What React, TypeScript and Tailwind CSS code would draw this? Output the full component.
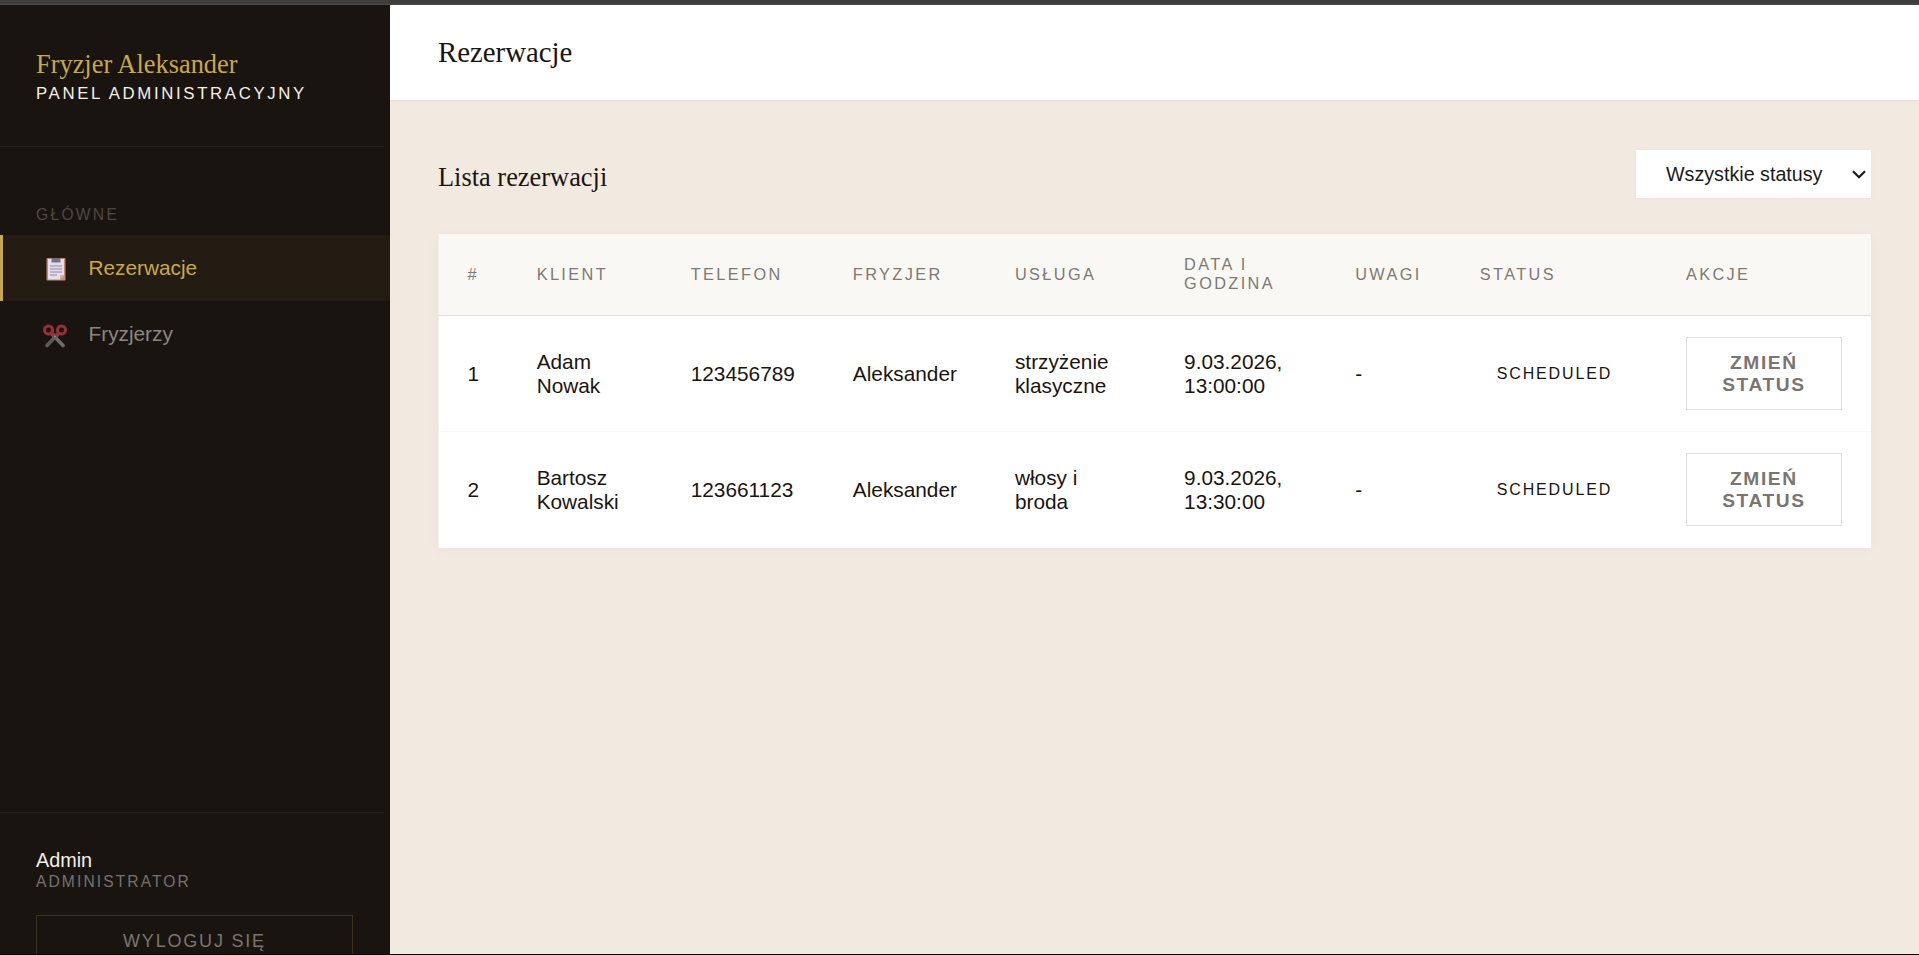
const columns = [
  { label: "#", width: "w-[69px]" },
  { label: "Klient", width: "w-[154px]" },
  { label: "Telefon", width: "w-[162px]" },
  { label: "Fryzjer", width: "w-[162px]" },
  { label: "Usługa", width: "w-[169px]" },
  { label: "Data i godzina", width: "w-[171px]" },
  { label: "Uwagi", width: "w-[124.5px]" },
  { label: "Status", width: "w-[206px]" },
  { label: "Akcje", width: "w-[213.5px]" },
];

const reservations = [
  {
    id: 1,
    client: "Adam Nowak",
    phone: "123456789",
    barber: "Aleksander",
    service: "strzyżenie klasyczne",
    date: "9.03.2026, 13:00:00",
    notes: "-",
    status: "scheduled",
  },
  {
    id: 2,
    client: "Bartosz Kowalski",
    phone: "123661123",
    barber: "Aleksander",
    service: "włosy i broda",
    date: "9.03.2026, 13:30:00",
    notes: "-",
    status: "scheduled",
  },
];

function ClipboardIcon() {
  return (
    <svg width="20" height="24" viewBox="0 0 20 24" aria-hidden="true">
      <rect x="0.5" y="1" width="19" height="22.5" rx="1" fill="#c08a6c" />
      <path d="M2 2h16v16l-4 4.5H2z" fill="#e6def0" />
      <path d="M18 18h-4v4.5z" fill="#c9b3c4" />
      <path d="M18.5 18.5v4.5h-4.5z" fill="#c99a55" />
      <rect x="5.5" y="1" width="9" height="4.5" rx="0.8" fill="#77707f" />
      <path d="M4 9h12M4 12h12M4 15h12M4 18h7" stroke="#8f8a9c" strokeWidth="1" />
    </svg>
  );
}

function ScissorsIcon() {
  return (
    <svg width="24" height="24" viewBox="0 0 24 24" fill="none" aria-hidden="true">
      <path d="M8.5 9.5l11.5 12" stroke="#6f6b6b" strokeWidth="3.6" strokeLinecap="round" />
      <path d="M15.5 9.5l-11.5 12" stroke="#5f5b5b" strokeWidth="3.6" strokeLinecap="round" />
      <circle cx="5.5" cy="6" r="4" stroke="#96303c" strokeWidth="3" />
      <circle cx="18.5" cy="6" r="4" stroke="#96303c" strokeWidth="3" />
      <path d="M8.5 9l3 2.5M15.5 9l-3 2.5" stroke="#96303c" strokeWidth="3" />
      <circle cx="12" cy="12.5" r="1" fill="#8d8888" />
    </svg>
  );
}

function Sidebar() {
  return (
    <aside className="flex w-[390px] shrink-0 flex-col bg-[#1a1410]">
      <div className="mr-1.5 h-[142px] border-b border-[#26201c] px-9 pt-11">
        <p className="font-['Liberation_Serif',serif] text-[26.4px] leading-[30px] text-[#c9a84c]">
          Fryzjer Aleksander
        </p>
        <p className="mt-[5px] text-[16.8px] leading-5 tracking-[2.64px] text-[#f5f0e8] uppercase">
          Panel administracyjny
        </p>
      </div>

      <nav className="flex flex-1 flex-col pt-[58px]">
        <p className="mb-[11px] px-9 text-[15.6px] leading-[19px] tracking-[2.3px] text-[#4d4844] uppercase">
          Główne
        </p>
        <a
          href="#rezerwacje"
          className="flex h-[66px] items-center border-l-[3px] border-[#c9a84c] bg-[#241c12] pl-[43px] text-[20.8px] text-[#c9a84c]"
        >
          <span className="mt-0.5 flex w-[42.5px]">
            <ClipboardIcon />
          </span>
          Rezerwacje
        </a>
        <a
          href="#fryzjerzy"
          className="flex h-[66px] items-center border-l-[3px] border-transparent pl-10 text-[20.8px] text-[#8b8682]"
        >
          <span className="mt-1 flex w-[45.5px]">
            <ScissorsIcon />
          </span>
          Fryzjerzy
        </a>
      </nav>

      <div className="mr-1.5 h-[142px] border-t border-[#26201c] pt-[35px] pr-[31px] pl-9">
        <p className="mb-px text-[19.8px] leading-6 text-[#f5f0e8]">Admin</p>
        <p className="text-[15.6px] leading-[18px] tracking-[2.1px] text-[#76716d] uppercase">
          Administrator
        </p>
        <button className="mt-6 h-[52px] w-full border border-[#3a3320] text-[18px] tracking-[1.8px] text-[#7a7571] uppercase">
          Wyloguj się
        </button>
      </div>
    </aside>
  );
}

function StatusFilter() {
  return (
    <button className="flex h-12 w-[235px] items-center justify-between bg-white pr-[5px] pl-[30px] text-[19.7px] text-[#1a1a1a] shadow-[0_0_3px_rgba(0,0,0,0.05)]">
      <span className="mt-0.5">Wszystkie statusy</span>
      <svg width="14" height="9" viewBox="0 0 14 9" fill="none" aria-hidden="true">
        <path d="M1 1.2l6 6 6-6" stroke="#1a1a1a" strokeWidth="2.2" />
      </svg>
    </button>
  );
}

function ReservationsTable() {
  return (
    <div className="border-l border-[#f4f1ea] bg-white shadow-[0_2px_14px_rgba(0,0,0,0.035)]">
      <table className="w-full table-fixed border-separate border-spacing-0 text-left">
        <thead>
          <tr className="h-[82px] bg-[#faf8f4]">
            {columns.map((column) => (
              <th
                key={column.label}
                className={`${column.width} border-b border-[#e3e1dc] pr-7 pb-px pl-[28.6px] text-[16.3px] leading-[19px] font-normal tracking-[2.4px] text-[#7d7975] uppercase`}
              >
                {column.label}
              </th>
            ))}
          </tr>
        </thead>
        <tbody className="text-[20.8px] leading-6 text-[#1a1410]">
          {reservations.map((item) => (
            <tr key={item.id} className="h-[116px] *:border-b *:border-[#f8f7f5] *:pr-7 *:pl-[28.6px] last:*:border-transparent">
              <td>{item.id}</td>
              <td>{item.client}</td>
              <td>{item.phone}</td>
              <td>{item.barber}</td>
              <td>{item.service}</td>
              <td>{item.date}</td>
              <td>{item.notes}</td>
              <td>
                <span className="block pl-[17px] text-[16px] leading-6 tracking-[1.85px] uppercase">
                  {item.status}
                </span>
              </td>
              <td>
                <button className="block h-[73px] w-[156px] border border-[#e0dfdd] px-6 text-[19.2px] leading-[22px] font-bold tracking-[1.6px] text-[#7a7573] uppercase">
                  Zmień status
                </button>
              </td>
            </tr>
          ))}
        </tbody>
      </table>
    </div>
  );
}

export default function App() {
  return (
    <div className="flex h-[955px] flex-col overflow-hidden border-b border-black bg-[#f2eae0] font-['Liberation_Sans',Arial,sans-serif]">
      <div className="h-[5px] shrink-0 border-b border-[#4a4a4a] bg-[#3d3d3d]" />
      <div className="flex min-h-0 flex-1">
        <Sidebar />
        <main className="min-w-0 flex-1">
          <header className="flex h-24 items-center border-b border-[#e6e1da] bg-white px-12 pb-0.5">
            <h1 className="font-['Liberation_Serif',serif] text-[28.8px] leading-8 text-[#1a1410]">
              Rezerwacje
            </h1>
          </header>
          <section className="px-12 pt-[49px]">
            <div className="mb-9 flex items-center justify-between">
              <h2 className="mt-[5px] font-['Liberation_Serif',serif] text-[26.4px] leading-[30px] text-[#1a1410]">
                Lista rezerwacji
              </h2>
              <StatusFilter />
            </div>
            <ReservationsTable />
          </section>
        </main>
      </div>
    </div>
  );
}
